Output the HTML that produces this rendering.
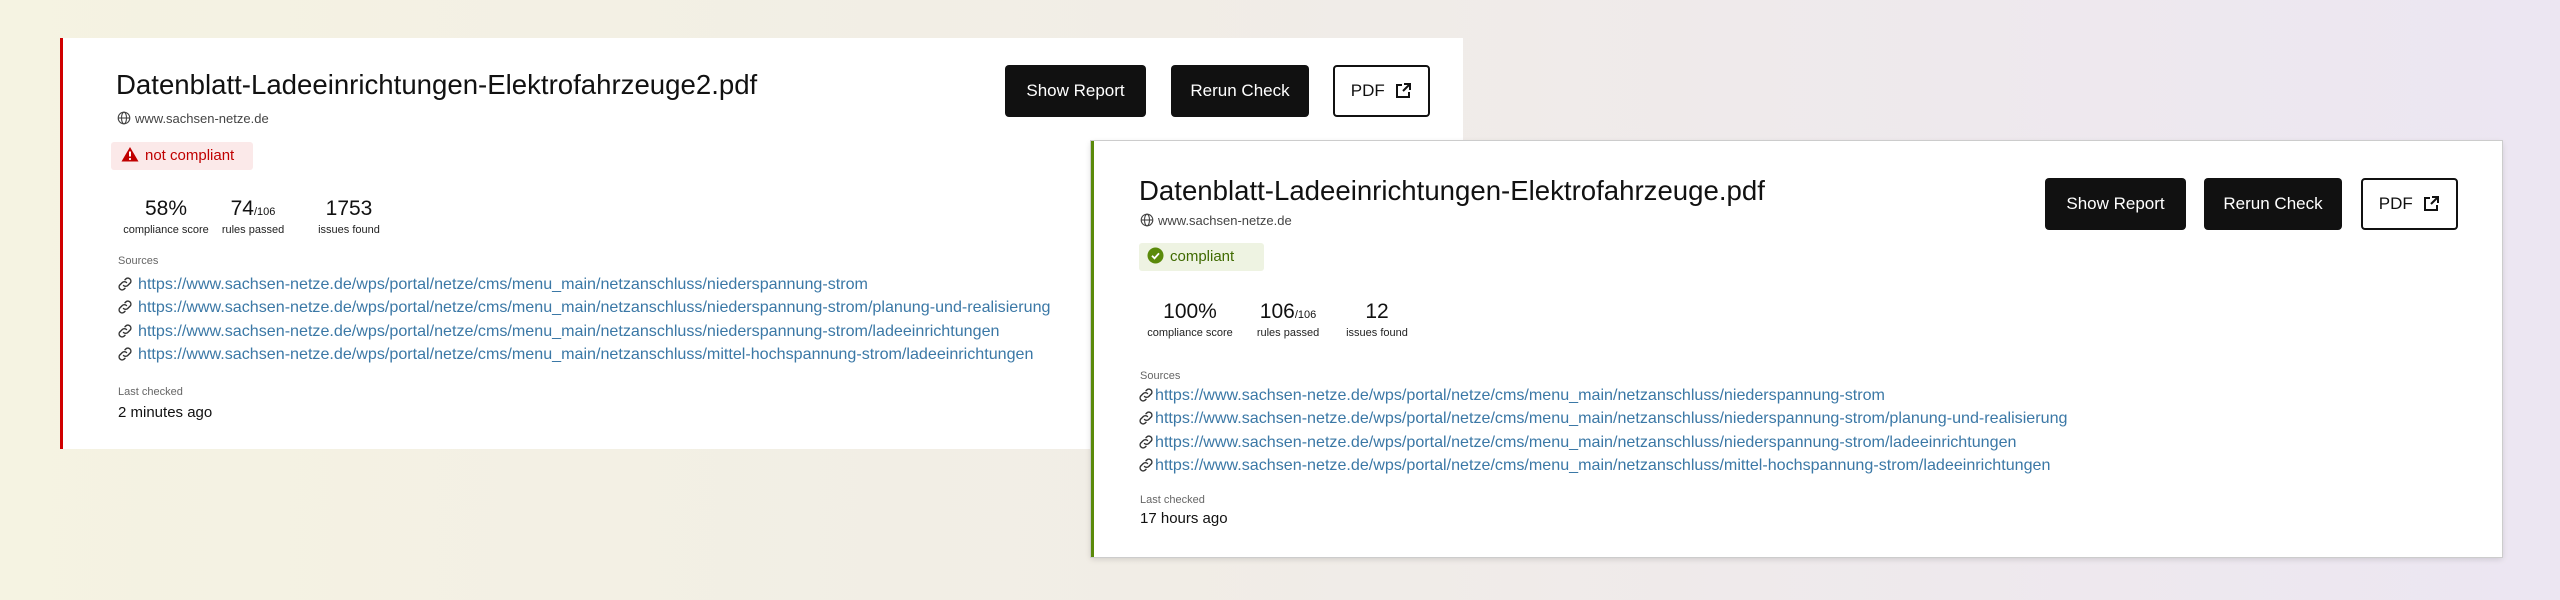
<!DOCTYPE html>
<html><head><meta charset="utf-8"><style>
*{margin:0;padding:0;box-sizing:border-box}
body{width:2560px;height:600px;overflow:hidden;position:relative;font-family:"Liberation Sans",sans-serif;color:#111;background:linear-gradient(90deg,#f5f3e2 0%,#f1ede6 45%,#ece6f2 100%)}
.card{position:absolute;background:#fff}
.t{position:absolute;white-space:nowrap}
.btn{position:absolute;height:52px;border-radius:4px;background:#111;color:#fff;font-size:17px;display:flex;align-items:center;justify-content:center}
.btn.o{background:#fff;color:#111;border:2px solid #111}
.title{font-size:27.6px;line-height:34px}
.dom{font-size:13px;line-height:16px;color:#444}
.num{font-size:21px;line-height:26px;text-align:center;width:120px;margin-left:-60px}
.num small{font-size:11px}
.lab{font-size:11px;line-height:14px;text-align:center;width:120px;margin-left:-60px;color:#222}
.sm{font-size:11px;line-height:14px;color:#666}
.lnk{font-size:16.1px;line-height:18px;color:#3b78a6}
.lnk svg{vertical-align:-3px;margin-right:5px}
.last{font-size:15px;line-height:18px}
</style></head><body>
<svg width="0" height="0" style="position:absolute"><defs>
<g id="lk"><path d="M6.5 9.5a3 3 0 0 0 4.2 0l2.6-2.6a3 3 0 0 0-4.2-4.2L8 3.8M9.5 6.5a3 3 0 0 0-4.2 0L2.7 9.1a3 3 0 0 0 4.2 4.2L8 12.2" fill="none" stroke="#333" stroke-width="1.4" stroke-linecap="round"/></g>
<g id="gl"><circle cx="7" cy="7" r="5.8" fill="none" stroke="#444" stroke-width="1.1"/><ellipse cx="7" cy="7" rx="2.5" ry="5.8" fill="none" stroke="#444" stroke-width="1.1"/><path d="M1.2 7h11.6" stroke="#444" stroke-width="1.1"/></g>
<g id="ex"><path d="M8 3H3v12h12v-5" fill="none" stroke="#111" stroke-width="2"/><path d="M10 2h6v6M16 2l-7 7" fill="none" stroke="#111" stroke-width="2"/></g>
</defs></svg>

<div class="card" style="left:60px;top:38px;width:1403px;height:411px;border-left:3px solid #d00000"></div>
<div class="t title" style="left:116px;top:68px">Datenblatt-Ladeeinrichtungen-Elektrofahrzeuge2.pdf</div>
<div class="t dom" style="left:117px;top:111px"><svg width="14" height="14" style="vertical-align:-2px;margin-right:4px"><use href="#gl"/></svg>www.sachsen-netze.de</div>
<div class="t" style="left:111px;top:142px;width:142px;height:28px;background:#fbe9e9;border-radius:3px;font-size:15px;line-height:28px;color:#c00000;padding-left:10px"><svg width="18" height="16" style="vertical-align:-2px;margin-right:6px"><path d="M9 1L17.5 15.5H0.5Z" fill="#c00000"/><path d="M9 5.5v5" stroke="#fff" stroke-width="2"/><circle cx="9" cy="13" r="1.1" fill="#fff"/></svg>not compliant</div>
<div class="t num" style="left:166px;top:196px">58%</div>
<div class="t num" style="left:253px;top:196px">74<small>/106</small></div>
<div class="t num" style="left:349px;top:196px">1753</div>
<div class="t lab" style="left:166px;top:223px">compliance score</div>
<div class="t lab" style="left:253px;top:223px">rules passed</div>
<div class="t lab" style="left:349px;top:223px">issues found</div>
<div class="t sm" style="left:118px;top:254px">Sources</div>
<div class="t lnk" style="left:117px;top:275px"><svg width="16" height="16"><use href="#lk"/></svg>https://www.sachsen-netze.de/wps/portal/netze/cms/menu_main/netzanschluss/niederspannung-strom</div>
<div class="t lnk" style="left:117px;top:298px"><svg width="16" height="16"><use href="#lk"/></svg>https://www.sachsen-netze.de/wps/portal/netze/cms/menu_main/netzanschluss/niederspannung-strom/planung-und-realisierung</div>
<div class="t lnk" style="left:117px;top:322px"><svg width="16" height="16"><use href="#lk"/></svg>https://www.sachsen-netze.de/wps/portal/netze/cms/menu_main/netzanschluss/niederspannung-strom/ladeeinrichtungen</div>
<div class="t lnk" style="left:117px;top:345px"><svg width="16" height="16"><use href="#lk"/></svg>https://www.sachsen-netze.de/wps/portal/netze/cms/menu_main/netzanschluss/mittel-hochspannung-strom/ladeeinrichtungen</div>
<div class="t sm" style="left:118px;top:385px">Last checked</div>
<div class="t last" style="left:118px;top:404px">2 minutes ago</div>
<div class="btn" style="left:1005px;top:65px;width:141px">Show Report</div>
<div class="btn" style="left:1171px;top:65px;width:138px">Rerun Check</div>
<div class="btn o" style="left:1333px;top:65px;width:97px">PDF&nbsp;&nbsp;<svg width="18" height="18"><use href="#ex"/></svg></div>

<div class="card" style="left:1091px;top:141px;width:1411px;height:416px;border-left:3px solid #5a8a0a;box-shadow:0 0 0 1px #ccc,0 2px 6px rgba(0,0,0,.15)"></div>
<div class="t title" style="left:1139px;top:174px">Datenblatt-Ladeeinrichtungen-Elektrofahrzeuge.pdf</div>
<div class="t dom" style="left:1140px;top:213px"><svg width="14" height="14" style="vertical-align:-2px;margin-right:4px"><use href="#gl"/></svg>www.sachsen-netze.de</div>
<div class="t" style="left:1139px;top:243px;width:125px;height:28px;background:#eef3e2;border-radius:3px;font-size:15px;line-height:28px;color:#3f6a00;padding-left:8px"><svg width="17" height="17" style="vertical-align:-3px;margin-right:6px"><circle cx="8.5" cy="8.5" r="8" fill="#5a8a0a"/><path d="M5 8.8l2.5 2.5 4.5-5" fill="none" stroke="#fff" stroke-width="1.8"/></svg>compliant</div>
<div class="t num" style="left:1190px;top:299px">100%</div>
<div class="t num" style="left:1288px;top:299px">106<small>/106</small></div>
<div class="t num" style="left:1377px;top:299px">12</div>
<div class="t lab" style="left:1190px;top:326px">compliance score</div>
<div class="t lab" style="left:1288px;top:326px">rules passed</div>
<div class="t lab" style="left:1377px;top:326px">issues found</div>
<div class="t sm" style="left:1140px;top:369px">Sources</div>
<div class="t lnk" style="left:1138px;top:386px"><svg width="16" height="16" style="margin-right:1px"><use href="#lk"/></svg>https://www.sachsen-netze.de/wps/portal/netze/cms/menu_main/netzanschluss/niederspannung-strom</div>
<div class="t lnk" style="left:1138px;top:409px"><svg width="16" height="16" style="margin-right:1px"><use href="#lk"/></svg>https://www.sachsen-netze.de/wps/portal/netze/cms/menu_main/netzanschluss/niederspannung-strom/planung-und-realisierung</div>
<div class="t lnk" style="left:1138px;top:433px"><svg width="16" height="16" style="margin-right:1px"><use href="#lk"/></svg>https://www.sachsen-netze.de/wps/portal/netze/cms/menu_main/netzanschluss/niederspannung-strom/ladeeinrichtungen</div>
<div class="t lnk" style="left:1138px;top:456px"><svg width="16" height="16" style="margin-right:1px"><use href="#lk"/></svg>https://www.sachsen-netze.de/wps/portal/netze/cms/menu_main/netzanschluss/mittel-hochspannung-strom/ladeeinrichtungen</div>
<div class="t sm" style="left:1140px;top:493px">Last checked</div>
<div class="t last" style="left:1140px;top:510px">17 hours ago</div>
<div class="btn" style="left:2045px;top:178px;width:141px">Show Report</div>
<div class="btn" style="left:2204px;top:178px;width:138px">Rerun Check</div>
<div class="btn o" style="left:2361px;top:178px;width:97px">PDF&nbsp;&nbsp;<svg width="18" height="18"><use href="#ex"/></svg></div>
</body></html>
